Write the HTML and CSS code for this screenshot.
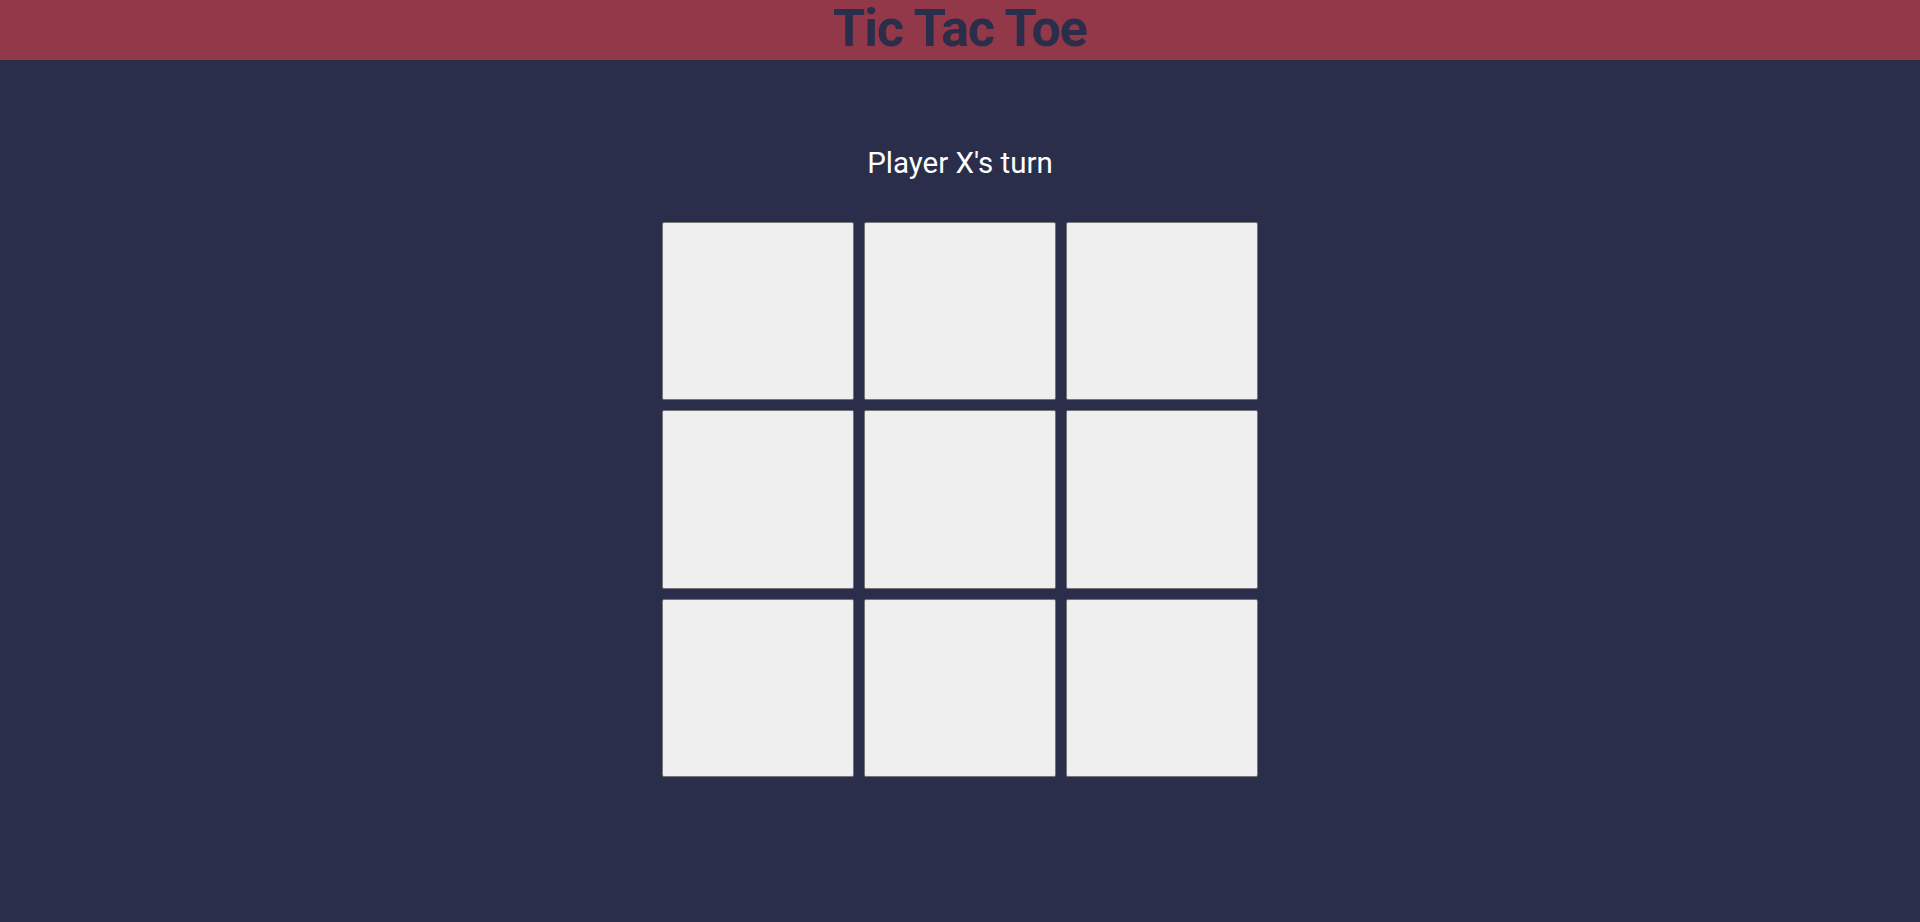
FILE: index.html
```html
<!DOCTYPE html>
<html lang="en">
<head>
<meta charset="utf-8">
<title>Tic Tac Toe</title>
<link rel="stylesheet" href="styles.css">
</head>
<body>
<header class="topbar">
  <h1 class="title">Tic Tac Toe</h1>
</header>
<main class="game">
  <p class="status">Player X's turn</p>
  <div class="board">
    <button class="cell"></button>
    <button class="cell"></button>
    <button class="cell"></button>
    <button class="cell"></button>
    <button class="cell"></button>
    <button class="cell"></button>
    <button class="cell"></button>
    <button class="cell"></button>
    <button class="cell"></button>
  </div>
</main>
</body>
</html>
```

FILE: styles.css
```css
html, body {
  margin: 0;
  padding: 0;
  height: 100%;
}
body {
  background: #2a2e4b;
  font-family: Roboto, "Liberation Sans", sans-serif;
  color: #ffffff;
}
.topbar {
  height: 60px;
  background: #933849;
  display: flex;
  align-items: flex-start;
  justify-content: center;
}
.title {
  margin: 0;
  font-size: 52px;
  font-weight: 700;
  letter-spacing: -1px;
  color: #2a2e4b;
  line-height: 58px;
}
.game {
  display: flex;
  flex-direction: column;
  align-items: center;
}
.status {
  margin: 85.5px 0 0;
  font-size: 29.5px;
  line-height: 34px;
  height: 34px;
}
.board {
  margin-top: 42.5px;
  display: grid;
  grid-template-columns: repeat(3, 192px);
  grid-template-rows: repeat(3, 178.33px);
  gap: 10px;
}
.cell {
  margin: 0;
  padding: 0;
  background: #efefef;
  border: 1px solid #767676;
  border-radius: 2px;
}
```
